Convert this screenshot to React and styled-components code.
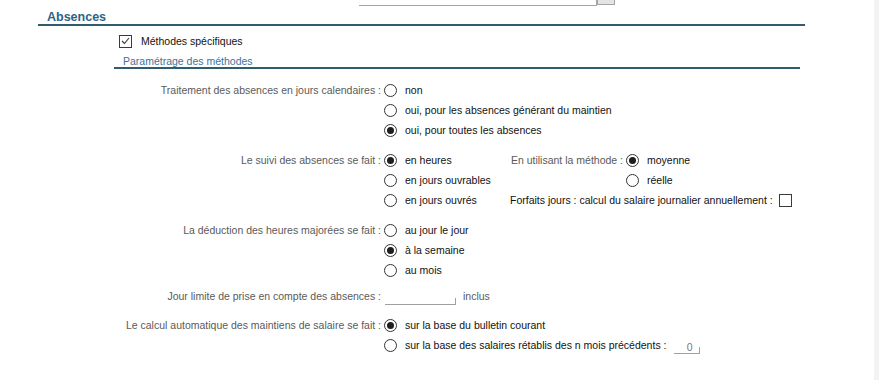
import React from 'react'
import styled, {createGlobalStyle} from 'styled-components'

const GlobalStyle = createGlobalStyle`
  html, body {
    margin: 0;
    padding: 0;
    background: #ffffff;
  }
  body {
    font-family: "Liberation Sans", Arial, sans-serif;
    font-size: 10.5px;
    color: #1a1a1a;
  }
`

const Page = styled.div`
  width: 879px;
  height: 380px;
  position: relative;
  overflow: hidden;
  background: #fff;
`

const ScrollTrack = styled.div`
  position: absolute;
  top: 0;
  right: 0;
  width: 5px;
  height: 100%;
  background: #f3f3f3;
`

const TopField = styled.div`
  display: flex;
  align-items: flex-end;
  margin-left: 359px;
  height: 6px;
`

const FieldLine = styled.div`
  width: 237px;
  height: 5px;
  border-bottom: 1px solid #a5a5a5;
  border-right: 1px solid #a5a5a5;
`

const FieldButton = styled.div`
  width: 16px;
  height: 4px;
  margin-bottom: 1px;
  background: #e4e4e4;
  border: 1px solid #a5a5a5;
  border-top: none;
`

const Section = styled.div`
  margin-left: 38px;
  width: 767px;
`

const SectionTitle = styled.div`
  height: 14px;
  padding: 4px 0 0 9px;
  font-size: 12.5px;
  font-weight: bold;
  color: #2d6486;
  border-bottom: 2px solid #2f5d6d;
  line-height: 14px;
`

const CheckRow = styled.label`
  display: flex;
  align-items: center;
  gap: 9px;
  height: 16px;
  margin: 7px 0 0 81px;
  color: #111;
`

const Box = styled.span`
  width: 11px;
  height: 11px;
  border: 1px solid #3a3a3a;
  background: #fff;
  display: inline-flex;
  align-items: center;
  justify-content: center;
  flex-shrink: 0;
`

const SubSection = styled.div`
  margin: 4px 5px 0 76px;
`

const SubTitle = styled.div`
  padding: 2px 0 0 9px;
  height: 12px;
  line-height: 13px;
  color: #3c739c;
  border-bottom: 2px solid #2f5d6d;
`

const Form = styled.div`
  display: grid;
  grid-template-columns: 381px 1fr;
  margin-top: 11px;
`

const Label = styled.div`
  grid-column: 1;
  text-align: right;
  color: #5a5a5a;
  height: 20px;
  line-height: 20px;
  white-space: nowrap;
  margin-top: ${p => p.$gap || 0}px;
`

const Options = styled.div`
  grid-column: 2;
  display: grid;
  grid-template-columns: ${p => p.$split ? '129px 1fr' : '1fr'};
  margin-top: ${p => p.$gap || 0}px;
`

const Column = styled.div`
  display: flex;
  flex-direction: column;
`

const Option = styled.div`
  display: flex;
  align-items: center;
  height: 20px;
  padding-left: 3px;
  gap: 8px;
  white-space: nowrap;
  color: #111;
`

const RadioDot = styled.span`
  width: 11px;
  height: 11px;
  border: 1px solid #333;
  border-radius: 50%;
  display: inline-flex;
  align-items: center;
  justify-content: center;
  flex-shrink: 0;
  &::after {
    content: '';
    width: 7px;
    height: 7px;
    border-radius: 50%;
    background: ${p => p.$on ? '#1e1e1e' : 'transparent'};
  }
`

const SideGrid = styled.div`
  display: grid;
  grid-template-columns: 113px auto;
  align-content: start;
`

const SideLabel = styled.div`
  height: 20px;
  line-height: 20px;
  color: ${p => p.$dark ? '#111' : '#5a5a5a'};
  white-space: nowrap;
  grid-column: ${p => p.$wide ? '1 / span 2' : '1'};
  display: flex;
  align-items: center;
  justify-content: ${p => p.$wide ? 'flex-start' : 'flex-end'};
  gap: 6px;
`

const Inline = styled.div`
  display: flex;
  align-items: center;
  height: 20px;
  gap: 7px;
  padding-left: 4px;
  color: #5a5a5a;
`

const Blank = styled.span`
  position: relative;
  display: inline-block;
  width: ${p => p.$w}px;
  height: 14px;
  border-bottom: 1px solid #a0a0a0;
  text-align: right;
  padding-right: 8px;
  box-sizing: border-box;
  color: #777;
  line-height: 14px;
  margin-top: 4px;
  &::after {
    content: '';
    position: absolute;
    right: 0;
    bottom: 0;
    height: 6px;
    border-right: 1px solid #a0a0a0;
  }
`

const Check = ({on}) => (
  <Box>
    {on && (
      <svg width="9" height="8" viewBox="0 0 9 8">
        <polyline points="1,4 3.5,6.5 8,1" fill="none" stroke="#333" strokeWidth="1.1" />
      </svg>
    )}
  </Box>
)

const Radio = ({on, children}) => (
  <Option>
    <RadioDot $on={on} />
    {children}
  </Option>
)

export default function App() {
  return (
    <Page>
      <GlobalStyle />
      <TopField>
        <FieldLine />
        <FieldButton />
      </TopField>
      <Section>
        <SectionTitle>Absences</SectionTitle>
        <CheckRow>
          <Check on />
          Méthodes spécifiques
        </CheckRow>
        <SubSection>
          <SubTitle>Paramétrage des méthodes</SubTitle>
        </SubSection>
      </Section>
      <Form>
        <Label>Traitement des absences en jours calendaires :</Label>
        <Options>
          <Radio>non</Radio>
          <Radio>oui, pour les absences générant du maintien</Radio>
          <Radio on>oui, pour toutes les absences</Radio>
        </Options>

        <Label $gap={10}>Le suivi des absences se fait :</Label>
        <Options $gap={10} $split>
          <Column>
            <Radio on>en heures</Radio>
            <Radio>en jours ouvrables</Radio>
            <Radio>en jours ouvrés</Radio>
          </Column>
          <SideGrid>
            <SideLabel>En utilisant la méthode :</SideLabel>
            <Radio on>moyenne</Radio>
            <SideLabel />
            <Radio>réelle</Radio>
            <SideLabel $wide $dark>
              Forfaits jours : calcul du salaire journalier annuellement :
              <Check />
            </SideLabel>
          </SideGrid>
        </Options>

        <Label $gap={10}>La déduction des heures majorées se fait :</Label>
        <Options $gap={10}>
          <Radio>au jour le jour</Radio>
          <Radio on>à la semaine</Radio>
          <Radio>au mois</Radio>
        </Options>

        <Label $gap={6}>Jour limite de prise en compte des absences :</Label>
        <Options $gap={6}>
          <Inline>
            <Blank $w={71} />
            inclus
          </Inline>
        </Options>

        <Label $gap={9}>Le calcul automatique des maintiens de salaire se fait :</Label>
        <Options $gap={9}>
          <Radio on>sur la base du bulletin courant</Radio>
          <Radio>
            sur la base des salaires rétablis des n mois précédents :
            <Blank $w={26}>0</Blank>
          </Radio>
        </Options>
      </Form>
      <ScrollTrack />
    </Page>
  )
}
